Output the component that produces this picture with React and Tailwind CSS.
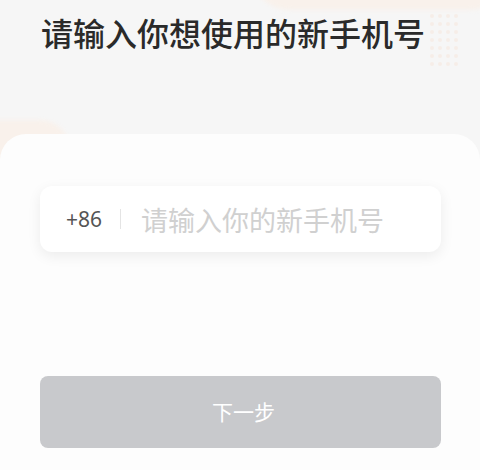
import React from "react";

const dots = Array.from({ length: 28 });

export default function App() {
  return (
    <div
      className="relative w-[480px] h-[470px] overflow-hidden bg-[#f6f6f6] flex flex-col"
      style={{ fontFamily: '"Noto Sans CJK SC", "Noto Sans", sans-serif' }}
    >
      {/* soft peach decorations */}
      <div className="absolute -top-[70px] left-[250px] w-[260px] h-[80px] rounded-full bg-[#fbeee4] opacity-60 blur-[2px]" />
      <div className="absolute top-[120px] -left-[40px] w-[110px] h-[60px] rounded-full bg-[#fbeee4] opacity-60 blur-[2px]" />
      <div className="absolute top-[14px] left-[430px] grid grid-cols-4 gap-x-[4px] gap-y-[4px] opacity-50">
        {dots.map((_, i) => (
          <span key={i} className="w-[4px] h-[4px] rounded-full bg-[#f7e6dc]" />
        ))}
      </div>

      {/* title */}
      <div className="relative h-[134px] pt-[10px] pl-[41px]">
        <h1 className="text-[32px] leading-[44px] font-medium text-[#2a2a2a]">
          请输入你想使用的新手机号
        </h1>
      </div>

      {/* card */}
      <div className="relative flex-1 bg-[#fdfdfd] rounded-t-[26px] pl-[40px] pr-[39px] pt-[52px]">
        <div className="flex items-center h-[66px] bg-white rounded-[12px] shadow-[0_4px_14px_rgba(0,0,0,0.07)] pl-[26px]">
          <span className="text-[21px] text-[#555] leading-none" style={{ fontFamily: '"Noto Sans", sans-serif' }}>
            +86
          </span>
          <span className="w-px h-[20px] bg-[#e4e4e4] ml-[18px] mr-[20px]" />
          <span className="text-[27px] text-[#d0d0d0] leading-none">请输入你的新手机号</span>
        </div>

        <button className="mt-[124px] w-full h-[72px] rounded-[8px] bg-[#c8c9cc] text-white text-[21px] pl-[6px] flex items-center justify-center">
          下一步
        </button>
      </div>
    </div>
  );
}
